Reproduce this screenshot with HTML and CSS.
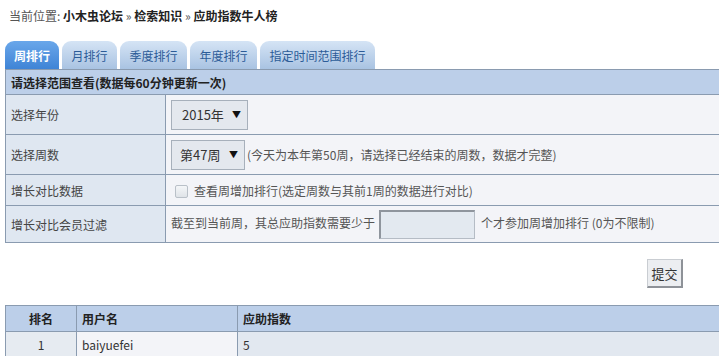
FILE: index.html
```html
<!DOCTYPE html>
<html lang="zh-CN">
<head>
<meta charset="utf-8">
<title>应助指数牛人榜</title>
<link rel="stylesheet" href="styles.css">
</head>
<body>
<div class="page">
  <div class="crumb">当前位置: <b>小木虫论坛</b> <b class="sep">»</b> <b>检索知识</b> <b class="sep">»</b> <b>应助指数牛人榜</b></div>
  <div class="tabs">
    <span class="tab active">周排行</span>
    <span class="tab">月排行</span>
    <span class="tab">季度排行</span>
    <span class="tab">年度排行</span>
    <span class="tab">指定时间范围排行</span>
  </div>
  <table class="form">
    <tr class="hd"><th colspan="2">请选择范围查看(数据每60分钟更新一次)</th></tr>
    <tr class="r1">
      <td class="lab">选择年份</td>
      <td class="val"><span class="sel s1">2015年<i class="arr">▼</i></span></td>
    </tr>
    <tr class="r2">
      <td class="lab">选择周数</td>
      <td class="val"><span class="sel s2">第47周<i class="arr">▼</i></span><span class="note">(今天为本年第50周，请选择已经结束的周数，数据才完整)</span></td>
    </tr>
    <tr class="r3">
      <td class="lab">增长对比数据</td>
      <td class="val"><span class="cb"></span><span class="note">查看周增加排行(选定周数与其前1周的数据进行对比)</span></td>
    </tr>
    <tr class="r4">
      <td class="lab">增长对比会员过滤</td>
      <td class="val">截至到当前周，其总应助指数需要少于<span class="inp"></span>个才参加周增加排行 (0为不限制)</td>
    </tr>
  </table>
  <div class="actions"><span class="btn">提交</span></div>
  <table class="list">
    <tr class="hd"><th class="c1">排名</th><th class="c2">用户名</th><th class="c3">应助指数</th></tr>
    <tr><td class="c1">1</td><td class="c2 alt">baiyuefei</td><td class="c3">5</td></tr>
  </table>
</div>
</body>
</html>
```
FILE: styles.css
```css
html { overflow: hidden; }
body {
  margin: 0;
  font-family: "Noto Sans CJK SC", "Noto Sans", sans-serif;
  font-size: 12px;
  color: #333;
  background: #fff;
}
.page { width: 780px; padding-left: 5px; }
.crumb {
  height: 16px;
  padding: 8px 0 0 4px;
  line-height: 16px;
  color: #555;
}
.crumb b { color: #222; font-weight: bold; }
.crumb .sep { color: #555; font-weight: normal; }
.tabs {
  display: flex;
  gap: 3px;
  margin-top: 16px;
  height: 29px;
  align-items: flex-end;
}
.tab {
  height: 28px;
  line-height: 29px;
  padding: 0 9.5px;
  border-radius: 9px 9px 0 0;
  background: linear-gradient(#d5e4f5, #a9c3e2);
  color: #2c5c98;
  box-sizing: border-box;
}
.tab.active {
  background: linear-gradient(#6aa7ea, #3f84d6);
  color: #fff;
  font-weight: bold;
  padding: 0 9px;
}
table { border-collapse: collapse; width: 775px; }
.form { border-left: 1px solid #8a9bb0; }
.form th, .form td { border: 1px solid #8a9bb0; border-left: none; border-right: none; padding: 0; }
.form .hd th {
  text-align: left;
  height: 24px;
  padding-left: 5px;
  background: #bccfe9;
  color: #222;
  font-weight: bold;
}
.form .lab {
  width: 154px;
  padding-left: 5px;
  background: #dfe7f1;
  border-right: 1px solid #8a9bb0;
  color: #444;
}
.form .val { background: #f3f4f8; padding-left: 5px; color: #555; }
.r1 td { height: 39px; }
.r2 td { height: 39px; }
.r3 td { height: 30px; }
.r4 td { height: 36px; }
.sel {
  display: inline-flex;
  align-items: center;
  justify-content: space-between;
  box-sizing: border-box;
  border: 1px solid #a7b0bb;
  background: #e4e8ee;
  color: #333;
  font-size: 13px;
  padding: 0 6px 0 10px;
  vertical-align: middle;
}
.s1 { width: 77px; height: 30px; }
.s2 { width: 74px; height: 30px; padding-left: 8px; }
.arr { font-style: normal; font-size: 9px; color: #111; }
.note { margin-left: 2px; vertical-align: middle; }
.cb {
  display: inline-block;
  width: 11px; height: 11px;
  margin: 0 6px 0 4px;
  border: 1px solid #b9c0c8;
  border-radius: 2px;
  background: linear-gradient(#f4f6f8, #dfe3e8);
  vertical-align: middle;
}
.r3 .note { margin-left: 0; }
.inp {
  display: inline-block;
  width: 96px; height: 29px;
  margin: 0 6px 0 4px;
  box-sizing: border-box;
  border: 1px solid #b5bcc5;
  border-top: 2px solid #8f959d;
  border-left: 2px solid #8f959d;
  background: #e3e9f0;
  vertical-align: middle;
}
.actions { height: 62px; padding-top: 16px; box-sizing: border-box; }
.btn {
  display: inline-block;
  margin-left: 642px;
  width: 36px; height: 29px;
  box-sizing: border-box;
  line-height: 27px;
  text-align: center;
  background: #eceef1;
  border: 1px solid #c9cdd2;
  border-right: 2px solid #8e9298;
  border-bottom: 2px solid #8e9298;
  color: #333;
  font-size: 13px;
}
.list { border-left: 1px solid #8a9bb0; }
.list th, .list td { border: 1px solid #8a9bb0; border-left: none; padding: 0 0 0 5px; height: 24px; }
.list th { background: #bccfe9; color: #222; font-weight: bold; text-align: left; height: 25px; }
.list td { background: #e2e8f0; color: #333; }
.list .c1 { width: 70px; text-align: center; padding: 0; }
.list .c2 { width: 155px; }
.list td.alt { background: #f3f4f8; }
.list td.c1 { background: #e6ebf1; }
```
